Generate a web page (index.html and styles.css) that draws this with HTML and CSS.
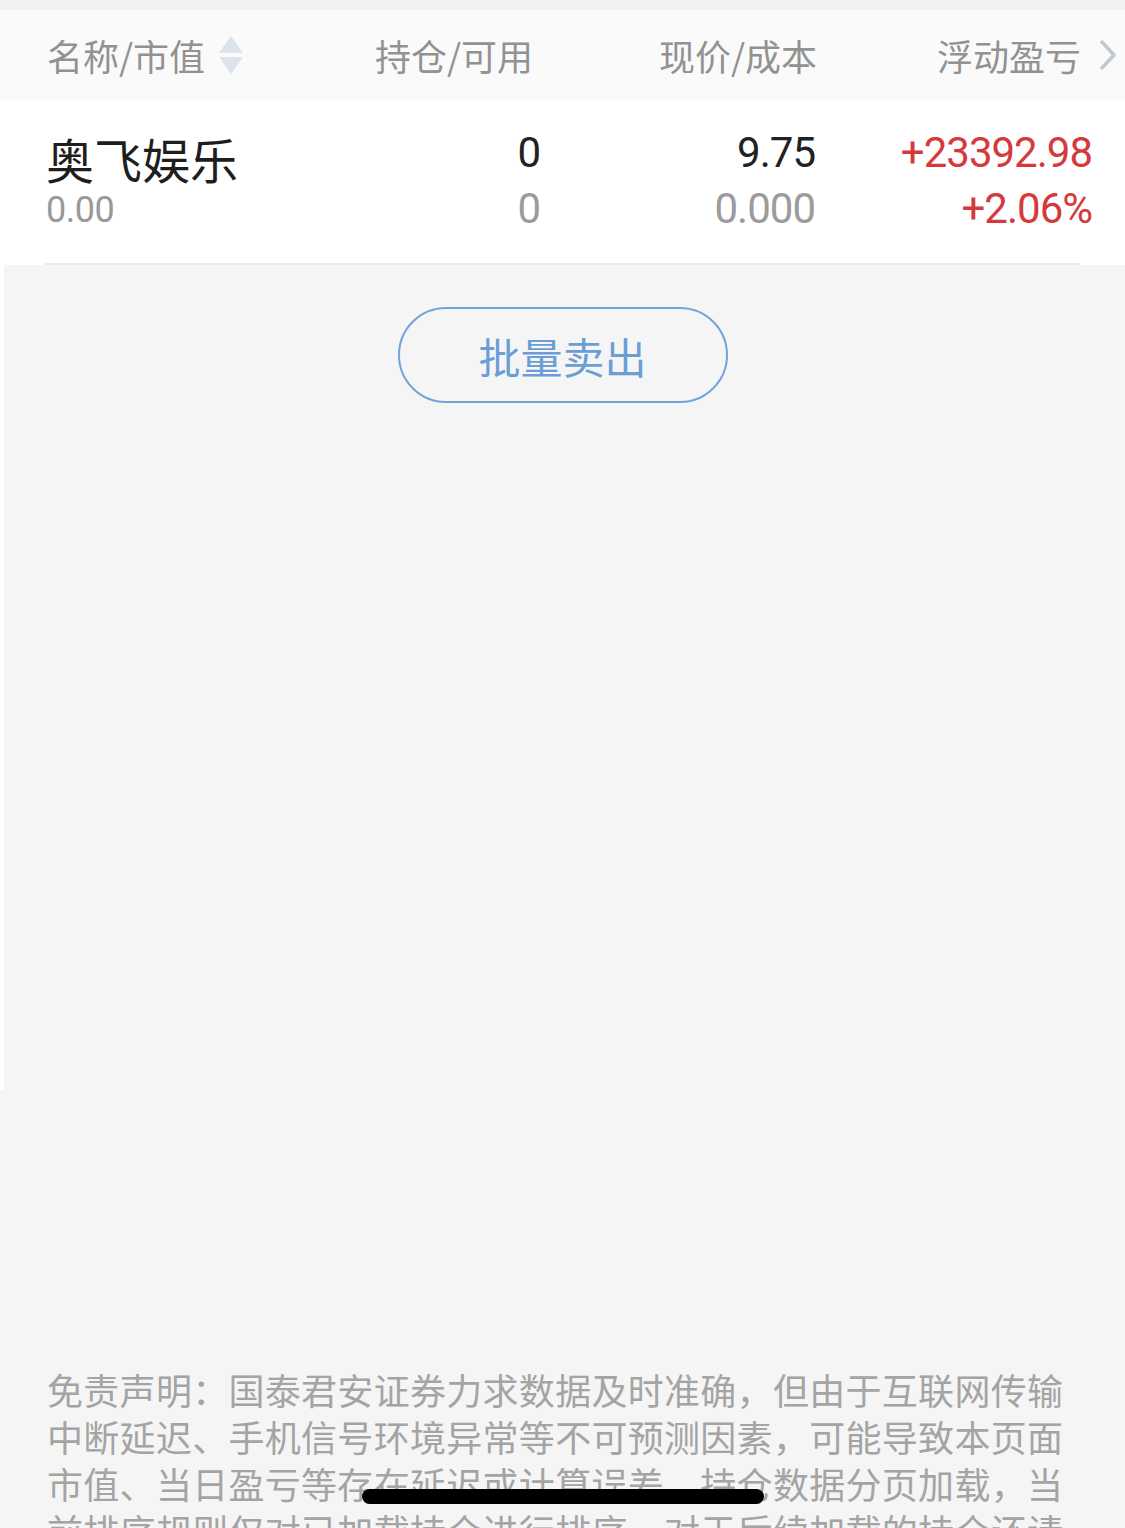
FILE: index.html
```html
<!DOCTYPE html>
<html lang="zh-CN">
<head>
    <meta charset="UTF-8">
    <meta name="viewport" content="width=device-width, initial-scale=1.0">
    <title>持仓</title>
    <link rel="stylesheet" href="styles.css">
</head>
<body>
    <div class="page">
        <div class="top-strip"></div>

        <div class="table-head">
            <div class="head-cell head-name">
                <span>名称/市值</span>
                <svg class="sort-icon" width="24" height="38" viewBox="0 0 24 38">
                    <path d="M12 0 L24 17 L0 17 Z" />
                    <path d="M0 21 L24 21 L12 38 Z" />
                </svg>
            </div>
            <div class="head-cell">持仓/可用</div>
            <div class="head-cell">现价/成本</div>
            <div class="head-cell head-profit">
                <span>浮动盈亏</span>
                <svg class="more-icon" width="18" height="30" viewBox="0 0 18 30">
                    <path d="M3 2 L15 15 L3 28" />
                </svg>
            </div>
        </div>

        <div class="stock-row">
            <div class="stock-cells">
                <div class="cell cell-name">
                    <span class="stock-name">奥飞娱乐</span>
                    <span class="sub-value">0.00</span>
                </div>
                <div class="cell cell-num">
                    <span class="main-num">0</span>
                    <span class="sub-num">0</span>
                </div>
                <div class="cell cell-num">
                    <span class="main-num">9.75</span>
                    <span class="sub-num">0.000</span>
                </div>
                <div class="cell cell-num rise">
                    <span class="main-num">+23392.98</span>
                    <span class="sub-num">+2.06%</span>
                </div>
            </div>
            <div class="row-divider"></div>
        </div>

        <div class="list-body">
            <button class="batch-sell" type="button">批量卖出</button>
        </div>

        <p class="disclaimer">免责声明：国泰君安证券力求数据及时准确，但由于互联网传输中断延迟、手机信号环境异常等不可预测因素，可能导致本页面市值、当日盈亏等存在延迟或计算误差。持仓数据分页加载，当前排序规则仅对已加载持仓进行排序，对于后续加载的持仓还请下拉加载后查看。</p>
    </div>

    <div class="home-indicator"></div>
</body>
</html>
```

FILE: styles.css
```css
html,
body {
    height: 100%;
}

body {
    margin: 0;
    padding: 0;
    overflow: hidden;
    background-color: #f5f5f5;
    font-family: "Noto Sans CJK SC", "Noto Sans", sans-serif;
}

.page {
    height: 100%;
    overflow: hidden;
}

.top-strip {
    height: 10px;
    background-color: #f2f2f2;
}

/* table header */
.table-head {
    height: 90px;
    display: grid;
    grid-template-columns: 253px 233px 284px 1fr;
    padding: 0 8px 0 47px;
    background-color: #fafafa;
    color: #929292;
    font-size: 36px;
}

.head-cell {
    display: flex;
    align-items: center;
    justify-content: flex-end;
}

.head-name {
    justify-content: flex-start;
    gap: 14px;
}

.head-profit {
    gap: 18px;
}

.sort-icon path {
    fill: #dce3ea;
}

.more-icon path {
    fill: none;
    stroke: #c0c9d4;
    stroke-width: 3.5;
    stroke-linecap: round;
    stroke-linejoin: round;
}

/* holding row */
.stock-row {
    background-color: #fff;
}

.stock-cells {
    display: grid;
    grid-template-columns: 253px 240px 275px 1fr;
    padding: 25px 34px 0 46px;
}

.cell {
    display: flex;
    flex-direction: column;
}

.cell-num {
    align-items: flex-end;
    font-family: Roboto, "Noto Sans", sans-serif;
    font-size: 42px;
    letter-spacing: -1px;
    margin-right: -1px;
}

.stock-name {
    font-size: 48px;
    line-height: 67px;
    color: #1e1e1e;
}

.sub-value {
    font-family: Roboto, "Noto Sans", sans-serif;
    font-size: 36px;
    line-height: 36px;
    letter-spacing: -0.5px;
    color: #999;
}

.main-num {
    line-height: 56px;
    color: #222;
}

.sub-num {
    line-height: 55px;
    color: #9b9b9b;
}

.rise .main-num,
.rise .sub-num {
    color: #d6393c;
}

.row-divider {
    height: 2px;
    margin: 27px 45px 0;
    background-color: #ececec;
}

/* empty list area */
.list-body {
    height: 825px;
    border-left: 4px solid #fff;
    display: flex;
    flex-direction: column;
    align-items: center;
    padding-top: 42px;
    box-sizing: border-box;
}

.batch-sell {
    width: 330px;
    height: 96px;
    margin-left: -4px;
    border: 2.5px solid #72a4d9;
    border-radius: 48px;
    background-color: transparent;
    color: #6a9ed5;
    font-family: "Noto Sans CJK SC", sans-serif;
    font-size: 42px;
    cursor: pointer;
}

.disclaimer {
    margin: 0;
    padding: 276px 62px 0 47px;
    color: #a4a4a4;
    font-size: 36px;
    line-height: 47px;
    text-align: justify;
}

.home-indicator {
    position: fixed;
    left: 50%;
    bottom: 24px;
    width: 402px;
    height: 15px;
    margin-left: -201px;
    border-radius: 8px;
    background-color: #000;
}
```
